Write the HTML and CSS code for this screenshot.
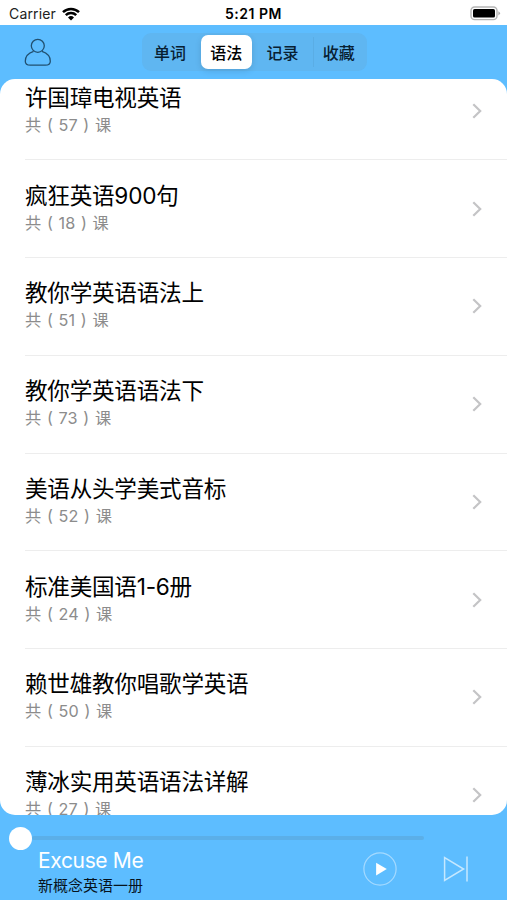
FILE: index.html
```html
<!DOCTYPE html>
<html lang="zh-CN">
<head>
    <meta charset="UTF-8">
    <meta name="viewport" content="width=device-width, initial-scale=1.0">
    <title>语法</title>
    <link rel="stylesheet" href="styles.css">
</head>
<body>
    <div class="status-bar">
        <div class="carrier">
            <span>Carrier</span>
            <svg class="wifi" width="18" height="14" viewBox="0 0 18 14">
                <path d="M1 5.2a11.4 11.4 0 0 1 16 0" />
                <path d="M3.8 8.1a7.4 7.4 0 0 1 10.4 0" />
                <path class="dot" d="M6 10.5a4.3 4.3 0 0 1 6 0L9 13.6z" />
            </svg>
        </div>
        <span class="time">5:21 PM</span>
        <svg class="battery" width="31" height="15" viewBox="0 0 31 15">
            <rect class="shell" x="1" y="1" width="26" height="12.6" rx="3.6" />
            <rect x="3" y="3" width="22" height="8.6" rx="1.6" />
            <path class="cap" d="M28.4 5.2q3.2 2.1 0 4.2z" />
        </svg>
    </div>

    <header class="nav">
        <svg class="user" width="28" height="29" viewBox="0 0 28 29">
            <circle cx="13.8" cy="7.8" r="6.5" />
            <path d="M9.6 13.4C4.2 15.2 1.3 19 1.3 23.2c0 3 1.9 4 5 4h15c3.1 0 5-1 5-4 0-4.2-2.9-8-8.3-9.8" />
        </svg>
        <div class="tabs">
            <button class="tab">单词</button>
            <button class="tab active">语法</button>
            <button class="tab">记录</button>
            <button class="tab divided">收藏</button>
        </div>
    </header>

    <main class="list-wrap">
        <ul class="list" id="courseList"></ul>
    </main>

    <footer class="player">
        <div class="slider">
            <span class="thumb"></span>
            <span class="track"></span>
        </div>
        <div class="player-row">
            <div class="playing">
                <p class="song">Excuse Me</p>
                <p class="album">新概念英语一册</p>
            </div>
            <svg class="play" width="34" height="34" viewBox="0 0 34 34">
                <circle cx="17" cy="17" r="16.1" />
                <path d="M13.1 10.8v12.6L23.8 17z" />
            </svg>
            <svg class="next" width="26" height="26" viewBox="0 0 26 26">
                <path d="M1.6 1.6v22.8L20.6 13zM24 .6v24.8" />
            </svg>
        </div>
    </footer>

    <script>
        const courses = [
            { name: '许国璋电视英语', count: 57 },
            { name: '疯狂英语900句', count: 18 },
            { name: '教你学英语语法上', count: 51 },
            { name: '教你学英语语法下', count: 73 },
            { name: '美语从头学美式音标', count: 52 },
            { name: '标准美国语1-6册', count: 24 },
            { name: '赖世雄教你唱歌学英语', count: 50 },
            { name: '薄冰实用英语语法详解', count: 27 }
        ];
        document.getElementById('courseList').innerHTML = courses.map(c => `
            <li class="item">
                <div class="item-text">
                    <p class="item-title">${c.name}</p>
                    <p class="item-count">共 ( ${c.count} ) 课</p>
                </div>
                <svg class="arrow" width="10" height="16" viewBox="0 0 10 16"><path d="M1.3 1.3L8.2 8l-6.9 6.7" /></svg>
            </li>`).join('');
    </script>
</body>
</html>
```
FILE: styles.css
```css
* {
  box-sizing: border-box;
}

body {
  margin: 0;
  height: 900px;
  display: flex;
  flex-direction: column;
  overflow: hidden;
  background: #5dbdff;
  font-family: Inter, "Noto Sans CJK SC", sans-serif;
  color: #000;
}

p, ul {
  margin: 0;
  padding: 0;
}

svg {
  display: block;
  flex: none;
}

.status-bar {
  height: 25px;
  padding: 2px 6px 0 9px;
  display: grid;
  grid-template-columns: 1fr auto 1fr;
  align-items: center;
  background: #fff;
  font-size: 14px;
}

.carrier {
  display: flex;
  align-items: center;
  gap: 6px;
  color: #222;
  letter-spacing: 0.15px;
}

.wifi {
  fill: none;
  stroke: #000;
  stroke-width: 2.5;
}

.wifi .dot {
  fill: #000;
  stroke: none;
}

.time {
  margin-right: 3px;
  font-size: 14px;
  font-weight: 600;
  letter-spacing: 0.5px;
}

.battery {
  justify-self: end;
}

.battery .shell {
  fill: none;
  stroke: #b5b5b5;
  stroke-width: 1.4;
}

.battery .cap {
  fill: #aaa;
}

.nav {
  height: 54px;
  display: flex;
  align-items: center;
  padding-left: 24px;
}

.user {
  fill: none;
  stroke: #215070;
  stroke-width: 1.3;
}

.tabs {
  display: flex;
  width: 225px;
  height: 38px;
  margin-left: 90px;
  padding: 2px 0;
  border-radius: 9px;
  background: #5fb6f1;
}

.tab {
  flex: 1;
  margin: 0 3px;
  padding: 0;
  border: none;
  border-radius: 7px;
  background: none;
  font-family: inherit;
  font-size: 16px;
  font-weight: 500;
  color: #082032;
}

.tab.active {
  background: #fff;
  color: #000;
  box-shadow: 0 2px 6px rgba(0, 0, 0, 0.12);
}

.tab.divided {
  border-radius: 0;
  box-shadow: -3px 0 0 -2px #5aade5;
}

.list-wrap {
  height: 735.5px;
  overflow: hidden;
  border-radius: 15px;
  background: #fff;
}

.list {
  margin-top: -16.5px;
  list-style: none;
}

.item {
  height: 97.75px;
  margin-left: 25px;
  padding-right: 25px;
  display: flex;
  align-items: center;
  justify-content: space-between;
  border-bottom: 1.5px solid #ededed;
}

.item-text {
  margin-top: -2px;
}

.item-title {
  font-size: 22.6px;
  line-height: 30px;
  letter-spacing: -0.25px;
}

.item-count {
  font-size: 16.2px;
  line-height: 24px;
  word-spacing: 1.2px;
  color: #8c8c8c;
}

.arrow {
  fill: none;
  stroke: #c4c4c6;
  stroke-width: 2.2;
}

.player {
  flex: 1;
  padding: 12px 38px 0 9px;
}

.slider {
  height: 23px;
  display: flex;
  align-items: center;
}

.thumb {
  width: 23px;
  height: 23px;
  border-radius: 50%;
  background: #fff;
}

.track {
  width: 392px;
  height: 4px;
  border-radius: 2px;
  background: #5bafe8;
}

.player-row {
  display: flex;
  align-items: center;
  padding-left: 29px;
}

.playing {
  flex: 1;
}

.song {
  font-size: 21px;
  line-height: 22px;
  letter-spacing: -0.35px;
  color: #fff;
}

.album {
  margin-top: 2px;
  font-size: 15px;
  line-height: 24px;
  color: #07131c;
}

.play {
  margin: -9px 46px 0 0;
}

.play circle {
  fill: none;
  stroke: #a5daff;
  stroke-width: 1.2;
}

.play path {
  fill: #fff;
}

.next {
  margin-top: -9px;
  fill: none;
  stroke: #c5e8ff;
  stroke-width: 1.5;
}
```
